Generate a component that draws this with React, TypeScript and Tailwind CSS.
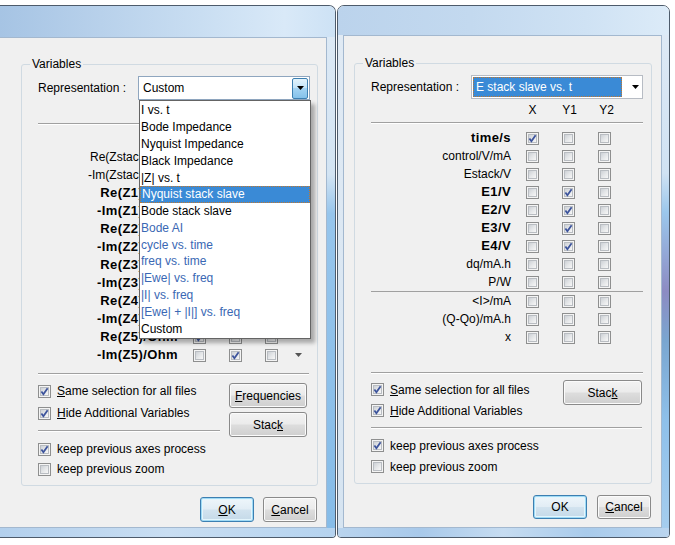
import type { ReactNode } from 'react'

type Row = { label: string; bold?: boolean; checks: number[]; sepAfter?: boolean; arrow?: boolean }

// Left window: list of impedance variables (partly hidden by the open combo list)
const LEFT_ROWS: Row[] = [
  { label: '', checks: [0] },
  { label: 'Re(Zstack)/Ohm', checks: [] },
  { label: '-Im(Zstack)/Ohm', checks: [] },
  { label: 'Re(Z1)/Ohm', bold: true, checks: [0] },
  { label: '-Im(Z1)/Ohm', bold: true, checks: [1] },
  { label: 'Re(Z2)/Ohm', bold: true, checks: [0] },
  { label: '-Im(Z2)/Ohm', bold: true, checks: [1] },
  { label: 'Re(Z3)/Ohm', bold: true, checks: [0] },
  { label: '-Im(Z3)/Ohm', bold: true, checks: [1] },
  { label: 'Re(Z4)/Ohm', bold: true, checks: [0] },
  { label: '-Im(Z4)/Ohm', bold: true, checks: [1] },
  { label: 'Re(Z5)/Ohm', bold: true, checks: [0] },
  { label: '-Im(Z5)/Ohm', bold: true, checks: [1], arrow: true },
]

const RIGHT_ROWS: Row[] = [
  { label: 'time/s', bold: true, checks: [0] },
  { label: 'control/V/mA', checks: [] },
  { label: 'Estack/V', checks: [] },
  { label: 'E1/V', bold: true, checks: [1] },
  { label: 'E2/V', bold: true, checks: [1] },
  { label: 'E3/V', bold: true, checks: [1] },
  { label: 'E4/V', bold: true, checks: [1] },
  { label: 'dq/mA.h', checks: [] },
  { label: 'P/W', checks: [], sepAfter: true },
  { label: '<I>/mA', checks: [] },
  { label: '(Q-Qo)/mA.h', checks: [] },
  { label: 'x', checks: [] },
]

const LIST = [
  { t: 'I vs. t' },
  { t: 'Bode Impedance' },
  { t: 'Nyquist Impedance' },
  { t: 'Black Impedance' },
  { t: '|Z| vs. t' },
  { t: 'Nyquist stack slave', sel: true },
  { t: 'Bode stack slave' },
  { t: 'Bode AI', blue: true },
  { t: 'cycle vs. time', blue: true },
  { t: 'freq vs. time', blue: true },
  { t: '|Ewe| vs. freq', blue: true },
  { t: '|I| vs. freq', blue: true },
  { t: '[Ewe| + |I|] vs. freq', blue: true },
  { t: 'Custom' },
]

function Arrow({ color = '#000' }: { color?: string }) {
  return (
    <svg width="7" height="4" viewBox="0 0 7 4">
      <path d="M0 0h7L3.5 4z" fill={color} />
    </svg>
  )
}

function Box({ checked, className = '' }: { checked?: boolean; className?: string }) {
  return (
    <span className={`relative flex h-[13px] w-[13px] shrink-0 items-center justify-center border border-[#8e8f8f] bg-[#f4f4f4] ${className}`}>
      <span className="h-[9px] w-[9px] border border-[#b9bdc2] bg-[linear-gradient(135deg,#cdd1d6_0%,#e4e6e8_50%,#f7f7f7_100%)]" />
      {checked && (
        <svg viewBox="0 0 13 13" className="absolute left-[-1px] top-[-1px] h-[13px] w-[13px]">
          <path d="M3.4 6.5 5.4 9.2 9.6 3.3" fill="none" stroke="#3d549c" strokeWidth="1.8" />
        </svg>
      )}
    </span>
  )
}

function Check({ checked, h, children }: { checked?: boolean; h: string; children: ReactNode }) {
  return (
    <div className={`flex items-center gap-[6px] whitespace-nowrap ${h}`}>
      <Box checked={checked} />
      <span>{children}</span>
    </div>
  )
}

function Btn({ focused, className, children }: { focused?: boolean; className: string; children: ReactNode }) {
  return (
    <div
      className={`flex items-center justify-center rounded-[3px] border ${className} ${
        focused
          ? 'border-[#3c7fb1] bg-[linear-gradient(180deg,#eef6fb_0%,#e2edf5_48%,#d2e3ef_52%,#c4d9e8_100%)] shadow-[inset_0_0_0_1px_#9fdaf5,inset_0_0_0_2px_#e4f5fc]'
          : 'border-[#8a8a8a] bg-[linear-gradient(180deg,#f3f3f3_0%,#ebebeb_48%,#dddddd_52%,#cfcfcf_100%)] shadow-[inset_0_0_0_1px_#fbfbfb]'
      }`}
    >
      {children}
    </div>
  )
}

function Sep({ className }: { className: string }) {
  return <div className={`border-t border-b border-t-[#a0a0a0] border-b-white ${className}`} />
}

function VarRow({ row }: { row: Row }) {
  return (
    <div className="flex h-[18px] items-center">
      <span className={`w-[156px] whitespace-nowrap text-right ${row.bold ? 'text-[13px] font-bold tracking-[0.4px]' : ''}`}>
        {row.label}
      </span>
      <Box className="ml-[15px]" checked={row.checks.includes(0)} />
      <Box className="ml-[23px]" checked={row.checks.includes(1)} />
      <Box className="ml-[23px]" checked={row.checks.includes(2)} />
      {row.arrow && (
        <span className="ml-[17px] flex">
          <Arrow color="#555" />
        </span>
      )}
    </div>
  )
}

function Rows({ rows }: { rows: Row[] }) {
  return (
    <div className="mt-[5px] flex h-[243px] flex-col">
      {rows.map((r, i) => (
        <div key={i}>
          <VarRow row={r} />
          {r.sepAfter && <div className="ml-[16px] mr-[8px] border-t border-[#a0a0a0]" />}
        </div>
      ))}
    </div>
  )
}

function Headers() {
  return (
    <div className="mt-[4px] flex h-[14px] items-center leading-[14px]">
      <span className="w-[159px]" />
      <span className="w-[37px] text-center">X</span>
      <span className="w-[37px] text-center">Y1</span>
      <span className="w-[37px] text-center">Y2</span>
    </div>
  )
}

function LeftCombo() {
  return (
    <div className="relative flex h-[24px] w-[172px] items-center border border-[#8fa6bf] bg-white">
      <span className="flex-1 pl-[4px]">Custom</span>
      <span className="mr-px flex h-[21px] w-[16px] items-center justify-center rounded-[2px] border border-[#3c7fb1] bg-[linear-gradient(180deg,#e3f3fc_0%,#c4e5f9_45%,#a3d3f3_50%,#84c1ea_100%)]">
        <Arrow />
      </span>
      {/* open drop-down list */}
      <div className="absolute left-0 top-[23px] z-10 flex h-[239px] w-[172px] flex-col border border-[#646464] bg-white py-px shadow-[4px_4px_4px_rgba(0,0,0,0.3)]">
        {LIST.map(it => (
          <div
            key={it.t}
            className={`flex h-[17px] items-center whitespace-nowrap pl-[1px] ${
              it.sel
                ? 'border border-dotted border-[#c0772f] bg-[#3a8ad6] text-white'
                : it.blue
                  ? 'text-[#3a68b4]'
                  : 'text-black'
            }`}
          >
            {it.t}
          </div>
        ))}
      </div>
    </div>
  )
}

function RightCombo() {
  return (
    <div className="flex h-[24px] w-[172px] items-center border border-[#b7bcc4] bg-white">
      <span className="ml-px flex h-[20px] w-[149px] items-center border border-dotted border-[#c0772f] bg-[#3a8ad6] pl-[2px] text-white">
        E stack slave vs. t
      </span>
      <span className="ml-[10px] flex">
        <Arrow />
      </span>
    </div>
  )
}

function Group({ right }: { right?: boolean }) {
  return (
    <fieldset
      className={`rounded-[3px] border border-[#d0dae2] pb-[6px] ${right ? 'w-[298px]' : 'w-[297px]'}`}
    >
      <legend className="ml-[8px] px-[2px] leading-[14px]">Variables</legend>
      <div className="mt-[5px] flex items-center pl-[16px]">
        <span className="w-[100px] whitespace-nowrap">Representation :</span>
        {right ? <RightCombo /> : <LeftCombo />}
      </div>
      <Headers />
      <Sep className="ml-[16px] mr-[8px] mt-[5px]" />
      <Rows rows={right ? RIGHT_ROWS : LEFT_ROWS} />
      <Sep className="ml-[16px] mr-[8px]" />
      {right ? (
        <>
          <div className="flex pl-[16px] pr-[9px]">
            <div className="pt-[5px]">
              <Check h="h-[21px]" checked>
                <u>S</u>ame selection for all files
              </Check>
              <Check h="h-[21px]" checked>
                <u>H</u>ide Additional Variables
              </Check>
            </div>
            <Btn className="ml-auto mt-[6px] h-[25px] w-[79px]">
              <span>
                Stac<u>k</u>
              </span>
            </Btn>
          </div>
          <Sep className="ml-[16px] mr-[9px] mt-[6px]" />
          <div className="ml-[16px] mt-[6px]">
            <Check h="h-[21px]" checked>
              keep previous axes process
            </Check>
            <Check h="h-[21px]">keep previous zoom</Check>
          </div>
        </>
      ) : (
        <div className="flex">
          <div className="ml-[16px] w-[182px] pt-[5px]">
            <Check h="h-[22px]" checked>
              <u>S</u>ame selection for all files
            </Check>
            <Check h="h-[22px]" checked>
              <u>H</u>ide Additional Variables
            </Check>
            <Sep className="mt-[6px]" />
            <div className="mt-[7px]">
              <Check h="h-[20px]" checked>
                keep previous axes process
              </Check>
              <Check h="h-[20px]">keep previous zoom</Check>
            </div>
          </div>
          <div className="ml-auto mr-[10px] mt-[8px] flex flex-col gap-[4px]">
            <Btn className="h-[25px] w-[78px]">
              <span>
                <u>F</u>requencies
              </span>
            </Btn>
            <Btn className="h-[25px] w-[78px]">
              <span>
                Stac<u>k</u>
              </span>
            </Btn>
          </div>
        </div>
      )}
    </fieldset>
  )
}

function Footer({ right }: { right?: boolean }) {
  return (
    <div className={`mt-[11px] flex justify-end ${right ? 'gap-[10px] pr-[10px]' : 'gap-[9px] pr-[9px]'}`}>
      <Btn focused className={right ? 'h-[24px] w-[54px]' : 'h-[25px] w-[54px]'}>
        {right ? <span>OK</span> : <span><u>O</u>K</span>}
      </Btn>
      <Btn className={right ? 'h-[24px] w-[54px]' : 'h-[25px] w-[54px]'}>
        <span>
          <u>C</u>ancel
        </span>
      </Btn>
    </div>
  )
}

export default function App() {
  return (
    <div className="flex h-[545px] w-[675px] items-start overflow-hidden bg-white pt-[5px] font-['Liberation_Sans',Arial,sans-serif] text-[12px] leading-[14px] text-black">
      {/* left window, cut by the left edge */}
      <div className="flex h-[533px] w-[336px] flex-col overflow-hidden rounded-br-[4px] rounded-tr-[7px] border-y border-r border-[#4d5b6b]">
        <div className="h-[31px] bg-[linear-gradient(90deg,#a6c4e4_0%,#b8d1eb_30%,#c9def2_60%,#d9e9f8_85%,#cde2f5_100%)]" />
        <div className="flex flex-1">
          <div className="flex flex-1 flex-col border-y border-r border-[#a3b8cf] bg-[#f0f0f0]">
            <div className="pl-[21px] pt-[19px]">
              <Group />
            </div>
            <Footer />
          </div>
          <div className="w-[8px] bg-[linear-gradient(180deg,#dce9f5_0%,#d3e4f3_28%,#96c5ec_36%,#86bce8_100%)]" />
        </div>
        <div className="h-[9px] bg-[linear-gradient(90deg,#b3d0ed_0%,#c9def2_50%,#b5d3ef_100%)]" />
      </div>

      {/* right window */}
      <div className="ml-px flex h-[533px] w-[333px] flex-col overflow-hidden rounded-b-[4px] rounded-t-[7px] border border-[#4d5b6b]">
        <div className="h-[29px] bg-[linear-gradient(90deg,#bbd3ec_0%,#c3d9ef_40%,#cfe2f4_75%,#dcebf8_100%)]" />
        <div className="flex flex-1">
          <div className="w-[5px] bg-[linear-gradient(180deg,#e0eaf4_0%,#d6e4f1_100%)]" />
          <div className="flex flex-1 flex-col border border-[#a3b8cf] bg-[#f0f0f0]">
            <div className="pl-[10px] pt-[20px]">
              <Group right />
            </div>
            <Footer right />
          </div>
          <div className="w-[7px] bg-[linear-gradient(180deg,#dde9f5_0%,#d0e2f3_28%,#9bc7ec_36%,#8c8bc3_52%,#7aa6d0_62%,#8ec0ea_78%,#a5cdee_100%)]" />
        </div>
        <div className="h-[9px] bg-[linear-gradient(90deg,#b9d4ee_0%,#a8c9ea_25%,#c6dcf1_50%,#a9cbeb_75%,#bad5ef_100%)]" />
      </div>
    </div>
  )
}
